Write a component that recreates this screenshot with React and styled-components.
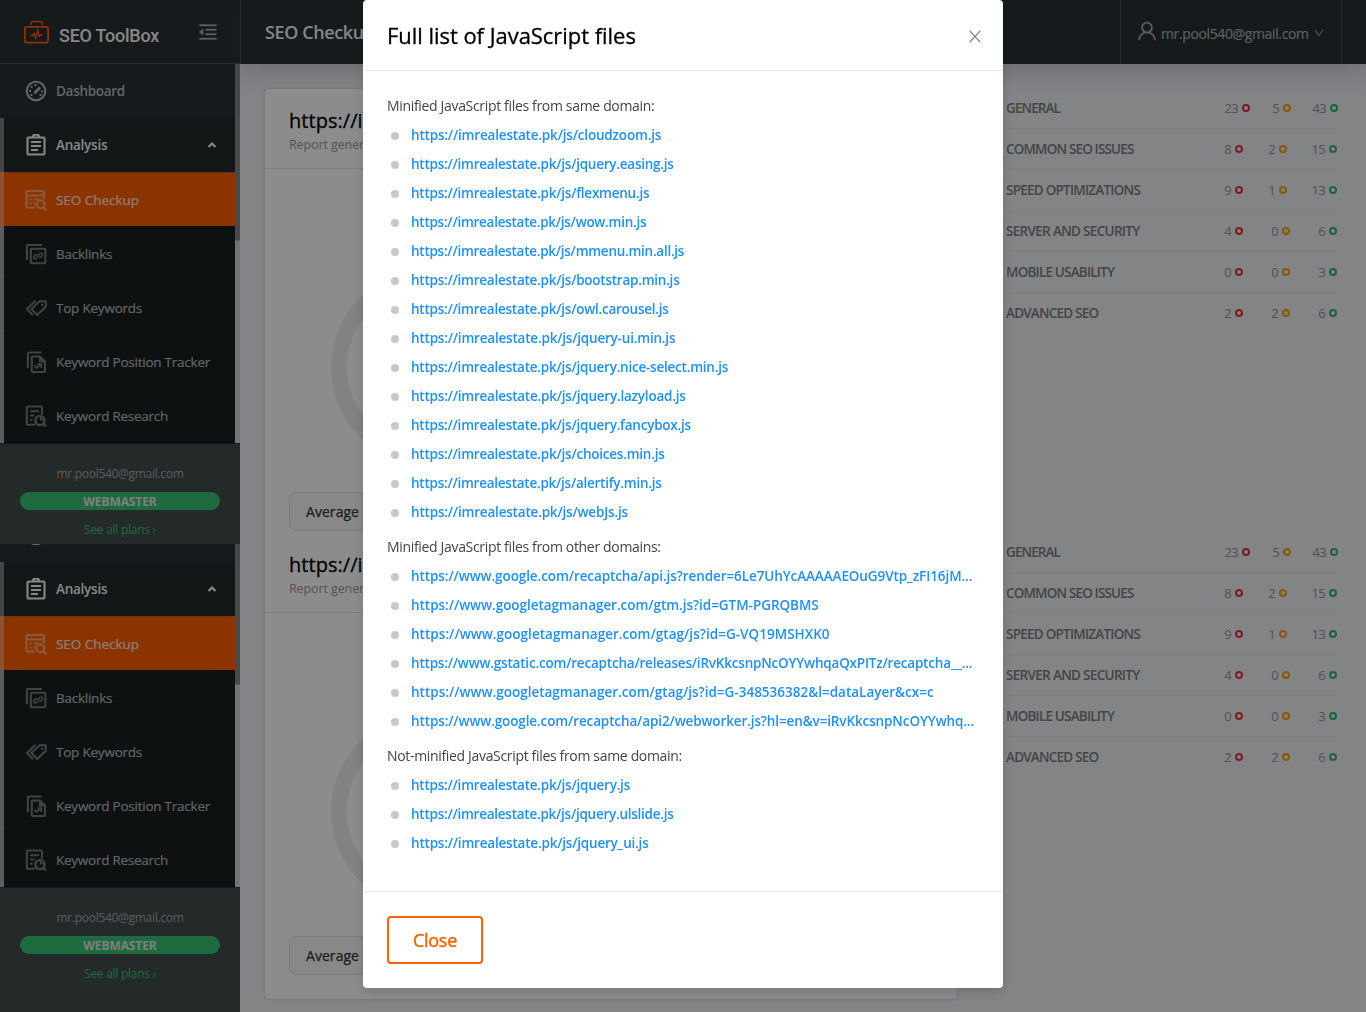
import React from 'react';
import styled, { createGlobalStyle, css } from 'styled-components';
import { AiOutlineMenuFold, AiOutlineUser, AiOutlineDown } from 'react-icons/ai';

const GlobalStyle = createGlobalStyle`
  *, *::before, *::after { box-sizing: border-box; }
  html, body { margin: 0; height: 1012px; overflow: hidden; }
  body {
    font-family: 'Open Sans', 'Noto Sans', sans-serif;
    font-size: 14px;
    color: #434b4c;
    background: #eff0f4;
  }
  ul { list-style: none; margin: 0; padding: 0; }
`;

const Page = styled.div`
  display: flex;
  width: 1366px;
  height: 1012px;
  overflow: hidden;
`;

/* ---------- sidebar ---------- */

const Sidebar = styled.aside`
  display: flex;
  flex-direction: column;
  flex: none;
  width: 240px;
  background: #2a3133;
`;

const Brand = styled.div`
  display: flex;
  align-items: center;
  height: 64px;
  flex: none;
  padding: 0 21px 0 24px;
  border-bottom: 1px solid #4b5355;
`;

const BrandName = styled.div`
  flex: 1;
  margin: 7px 0 0 10px;
  font-family: Roboto, sans-serif;
  font-size: 18px;
  font-weight: 500;
  letter-spacing: -0.25px;
  color: #fff;
  opacity: 0.95;
`;

const FoldIcon = styled(AiOutlineMenuFold)`
  width: 22px;
  height: 22px;
  margin-top: 1px;
  color: #a5a9aa;
  stroke: currentColor;
  stroke-width: 18px;
`;

const MenuWindow = styled.div`
  display: flex;
  flex: none;
  height: ${(p) => p.$height}px;
  overflow: hidden;
  align-items: flex-end;
`;

const MenuList = styled.ul`
  width: 235px;
`;

const Scrollbar = styled.div`
  width: 5px;
  height: 379px;
  background: #d4d4d4;
`;

const Thumb = styled.div`
  height: 177px;
  border-radius: 0 0 3px 3px;
  background: #868686;
`;

const variants = {
  root: css`
    color: #b4b8b9;
    font-weight: 600;
    background: #2a3133;
    border-left-color: #2a3133;
  `,
  open: css`
    color: #f7f7f7;
    font-weight: 600;
    background: #222a2c;
    border-left-color: #7b7f80;
    letter-spacing: -0.25px;
  `,
  active: css`
    padding-top: 2px;
    color: #ffe4d4;
    background: #ff6000;
    border-left-color: #ff9556;
    box-shadow: inset 0 1px 0 #d95200;
    -webkit-text-stroke: 0.2px;
  `,
  sub: css`
    padding-top: 2px;
    color: #b4b8b9;
    background: #181f21;
    border-left-color: #a7abac;
    box-shadow: inset 0 -1px 0 #12191b;
    -webkit-text-stroke: 0.2px;
  `,
};

const MenuItem = styled.li`
  display: flex;
  align-items: center;
  height: 54px;
  padding: 0 18px 0 21px;
  border-left: 4px solid;
  font-size: 13.5px;
  letter-spacing: -0.3px;
  font-weight: 500;
  ${(p) => variants[p.$variant]}
  &:last-child { height: 55px; padding-bottom: 1px; }
`;

const Glyph = styled.svg`
  width: 22px;
  height: 22px;
  margin-right: 9px;
  flex: none;
  fill: none;
  stroke: currentColor;
  stroke-width: 2.1;
  opacity: ${(p) => p.$opacity};
`;

const Label = styled.span`
  flex: 1;
  letter-spacing: ${(p) => p.$ls || 'inherit'};
  white-space: nowrap;
`;

const Caret = styled.svg`
  width: 10px;
  height: 8px;
  fill: none;
  stroke: currentColor;
  stroke-width: 2.2;
`;

const Account = styled.div`
  display: flex;
  flex-direction: column;
  flex: none;
  align-items: center;
  height: ${(p) => p.$height}px;
  padding: 20px 20px 0;
  border-top: 1px solid #2a3133;
  background: #434b4c;
  font-size: 12px;
`;

const Email = styled.div`
  height: 20px;
  line-height: 20px;
  letter-spacing: -0.3px;
  color: #a5a9aa;
`;

const Plan = styled.div`
  width: 200px;
  height: 18px;
  margin-top: 8px;
  border-radius: 9px;
  background: #36c374;
  color: #e4e8e4;
  font-weight: 700;
  line-height: 19px;
  letter-spacing: -0.1px;
  text-align: center;
`;

const Plans = styled.div`
  margin-top: 10px;
  line-height: 20px;
  letter-spacing: -0.27px;
  color: #36c374;
`;

/* ---------- main area ---------- */

const Main = styled.div`
  display: flex;
  flex-direction: column;
  flex: 1;
`;

const TopBar = styled.header`
  display: flex;
  flex: none;
  align-items: stretch;
  justify-content: space-between;
  height: 64px;
  padding: 0 24px;
  border-left: 1px solid #4b5355;
  background: #2a3133;
  box-shadow: 0 4px 28px rgba(60, 60, 95, 0.3);
`;

const PageTitle = styled.div`
  align-self: center;
  font-size: 18px;
  font-weight: 600;
  letter-spacing: -0.4px;
  color: #f2f2f2;
`;

const UserMenu = styled.div`
  display: flex;
  align-items: center;
  width: 222px;
  padding: 2px 0 0 14px;
  border: solid #4b5355;
  border-width: 0 1px;
  color: #a5a9aa;
  font-weight: 500;
  letter-spacing: -0.37px;
  -webkit-text-stroke: 0.2px;
  & > svg:first-child { width: 24px; height: 24px; margin: -5px 2px 0 0; }
  & > svg:last-child { width: 12px; height: 12px; margin-left: 4px; }
`;

const Content = styled.div`
  display: flex;
  align-items: flex-start;
  padding: 25px 24px 0 25px;
`;

const Card = styled.section`
  flex: none;
  width: 692px;
  height: 910px;
  border-radius: 4px;
  background: #fff;
  box-shadow: 0 0 3px rgba(70, 80, 100, 0.3);
`;

const Report = styled.article`
  height: 444px;
`;

const ReportHeader = styled.div`
  height: 80px;
  padding: 18px 24px 0;
  border-bottom: 1px solid #e2e2e2;
`;

const Site = styled.div`
  height: 28px;
  line-height: 27px;
  font-size: 20px;
  font-weight: 500;
  letter-spacing: 0.05px;
  color: #000;
  -webkit-text-stroke: 0.3px;
`;

const Generated = styled.div`
  height: 20px;
  line-height: 20px;
  font-size: 12.5px;
  letter-spacing: -0.1px;
  color: #9a9a9a;
`;

const Gauge = styled.div`
  width: 197px;
  height: 197px;
  margin: 100px 0 26px 66px;
  border: 16px solid #ededed;
  border-radius: 50%;
`;

const Average = styled.div`
  width: 300px;
  height: 39px;
  margin-left: 24px;
  padding-left: 16px;
  border: 1px solid #dedede;
  border-radius: 7px;
  background: #f8f8f8;
  color: #333;
  font-weight: 500;
  line-height: 38px;
  letter-spacing: 0.05px;
  -webkit-text-stroke: 0.25px;
`;

const Score = styled.span`
  color: #d69a3c;
`;

const Side = styled.div`
  width: 331px;
  margin-left: 49px;
`;

const Summary = styled.ul`
  height: 444px;
`;

const SummaryRow = styled.li`
  display: flex;
  align-items: center;
  height: 41px;
  padding-bottom: 1px;
  border-bottom: 1px solid ${(p) => (p.$last ? 'transparent' : '#e3e4e8')};
  &:first-child { height: 40px; padding-bottom: 2px; }
`;

const Topic = styled.div`
  flex: 1;
  font-size: 13.5px;
  font-weight: 600;
  letter-spacing: ${(p) => p.$ls}px;
  color: #7d7e80;
  white-space: nowrap;
`;

const Count = styled.div`
  display: flex;
  align-items: center;
  justify-content: flex-end;
  flex: none;
  width: ${(p) => p.$width}px;
  margin-right: ${(p) => p.$shift || 0}px;
  font-size: 13px;
  letter-spacing: -0.7px;
  color: #93949a;
  &::after {
    content: '';
    flex: none;
    width: 8px;
    height: 8px;
    margin: 1px 0 0 4px;
    border: 2px solid ${(p) => p.$color};
    border-radius: 50%;
  }
`;

/* ---------- dialog ---------- */

const Mask = styled.div`
  position: fixed;
  inset: 0;
  display: flex;
  justify-content: center;
  align-items: flex-start;
  background: rgba(0, 0, 0, 0.45);
`;

const Dialog = styled.div`
  width: 640px;
  height: 988px;
  border-radius: 4px;
  background: #fff;
  box-shadow: 0 4px 12px rgba(0, 0, 0, 0.15);
`;

const DialogHeader = styled.div`
  display: flex;
  align-items: center;
  justify-content: space-between;
  height: 71px;
  padding: 0 22px 0 24px;
  border-bottom: 1px solid #e8e8e8;
`;

const DialogTitle = styled.h1`
  margin: 0;
  font-size: 22px;
  font-weight: 500;
  letter-spacing: -0.04px;
  color: #000;
  -webkit-text-stroke: 0.3px;
`;

const CloseIcon = styled.svg`
  width: 12px;
  height: 13px;
  margin-top: 2px;
  fill: none;
  stroke: #8c8c8c;
  stroke-width: 1.3;
`;

const DialogBody = styled.div`
  height: 820px;
  padding: 20px 24px 0;
`;

const Group = styled.section`
  margin-bottom: 6px;
`;

const GroupLabel = styled.div`
  height: 29px;
  line-height: 30px;
  letter-spacing: -0.33px;
  color: #3f4647;
`;

const FileRow = styled.li`
  display: flex;
  align-items: center;
  height: 29px;
  padding: 1px 0 0 4px;
  &::before {
    content: '';
    flex: none;
    width: 8px;
    height: 8px;
    margin: 1px 12px 0 0;
    border-radius: 50%;
    background: #c8c8c8;
  }
`;

const FileLink = styled.a`
  color: #1e90ff;
  font-size: 13.5px;
  font-weight: 600;
  letter-spacing: ${(p) => p.$ls || 0}px;
  white-space: nowrap;
`;

const DialogFooter = styled.div`
  padding: 24px;
  border-top: 1px solid #e8e8e8;
`;

const CloseButton = styled.button`
  width: 96px;
  height: 48px;
  border: 2px solid #ff6000;
  border-radius: 4px;
  background: #fff;
  color: #ff6000;
  font: 500 18px/43px 'Open Sans', 'Noto Sans', sans-serif;
  letter-spacing: -0.3px;
  padding: 0;
  -webkit-text-stroke: 0.4px;
`;

/* ---------- icons ---------- */

const icons = {
  dashboard: (
    <>
      <circle cx="11" cy="11" r="9.3" />
      <path d="M10 12.5 L15 7.5" strokeWidth="2.6" />
      <circle cx="10.3" cy="12.6" r="1.4" fill="currentColor" stroke="none" />
      <path d="M4 11h2M16 11.5h2M10.5 4v2M6 6.2l1.3 1.3M5.5 15h2M14.5 15h2" />
    </>
  ),
  analysis: (
    <>
      <rect x="2.5" y="3.5" width="17" height="17" rx="1" />
      <path d="M8 3.2a3 3 0 0 1 6 0" strokeWidth="2.4" />
      <path d="M6 8h10M6 12h10M6 16h7" strokeWidth="1.8" />
    </>
  ),
  checkup: (
    <>
      <path d="M10 18.5H2.5a1 1 0 0 1-1-1V3a1 1 0 0 1 1-1H18a1 1 0 0 1 1 1v7M2 6.5h17M4.5 10.3h2M8.5 10.3H14M4.5 14.3h2M8.5 14.3h2" />
      <circle cx="15.5" cy="15.2" r="3.9" />
      <path d="M18 18l3.3 3.3" strokeWidth="2.6" />
    </>
  ),
  backlinks: (
    <>
      <path d="M1.9 17V3a1 1 0 0 1 1-1H17" />
      <rect x="5.8" y="5.8" width="14.6" height="14.4" rx="1" />
      <path d="M12.2 14.600l-.800.800a1.600 1.600 0 0 1-2.300-2.300l1-1a1.600 1.600 0 0 1 2.300 0M14 11.400l.800-.800a1.600 1.600 0 0 1 2.300 2.300l-1 1a1.600 1.600 0 0 1-2.300 0M12 14l2.200-2.200" strokeWidth="1.5" />
    </>
  ),
  keywords: (
    <>
      <path d="M14.5 4.2h6.3v5.6L12.3 18 6.3 12z" strokeLinejoin="round" />
      <path d="M10.5 3.7L1.9 12l6 6.3" />
      <circle cx="17.2" cy="7.8" r="1.2" fill="currentColor" stroke="none" />
    </>
  ),
  tracker: (
    <>
      <path d="M2.9 17V3a1.5 1.5 0 0 1 1.5-1.5H16.5" />
      <path d="M6.8 6.5a1 1 0 0 1 1-1H15l5 5v9.500a1 1 0 0 1-1 1H7.800a1 1 0 0 1-1-1z" />
      <path d="M14 5.5v6h6z" fill="currentColor" stroke="none" />
      <path d="M9.500 14.500l2 2.500 4-3.500M12.500 13.200h3.800v3.800" strokeWidth="1.8" />
    </>
  ),
  research: (
    <>
      <path d="M10 19.8H2.8a1 1 0 0 1-1-1V2.500a1 1 0 0 1 1-1H16a1 1 0 0 1 1 1v7M5 6.200h9M5 10.500h4.500M5 14.800h2.500" />
      <circle cx="15" cy="15.5" r="4.6" strokeWidth="2.5" />
      <path d="M18.3 18.8l2.7 2.7" strokeWidth="2.5" />
      <path d="M15 11.5v4h4z" fill="currentColor" stroke="none" />
    </>
  ),
};

const menu = [
  ['dashboard', 'Dashboard', 'root', 1, '-0.3px'],
  ['analysis', 'Analysis', 'open', 1],
  ['checkup', 'SEO Checkup', 'active', 0.5, '-0.03px'],
  ['backlinks', 'Backlinks', 'sub', 0.6, '-0.25px'],
  ['keywords', 'Top Keywords', 'sub', 0.6, '-0.22px'],
  ['tracker', 'Keyword Position Tracker', 'sub', 0.6, '-0.24px'],
  ['research', 'Keyword Research', 'sub', 0.6, '-0.26px'],
];

const summary = [
  ['GENERAL', [23, 5, 43], [25, 41, 47], -0.9, -1],
  ['COMMON SEO ISSUES', [8, 2, 15], [25, 44, 50], -0.84],
  ['SPEED OPTIMIZATIONS', [9, 1, 13], [25, 44, 50], -0.76],
  ['SERVER AND SECURITY', [4, 0, 6], [25, 47, 47], -0.68],
  ['MOBILE USABILITY', [0, 0, 3], [25, 47, 47], -0.8],
  ['ADVANCED SEO', [2, 2, 6], [25, 47, 47], -0.8],
];
const colors = ['#e8303c', '#f2a30c', '#2fb866'];

const own = 'https://imrealestate.pk/js/';
const groups = [
  {
    label: 'Minified JavaScript files from same domain:',
    files: [
      [own + 'cloudzoom.js', -0.18],
      [own + 'jquery.easing.js', -0.24],
      [own + 'flexmenu.js', -0.24],
      [own + 'wow.min.js', -0.26],
      [own + 'mmenu.min.all.js', -0.26],
      [own + 'bootstrap.min.js', -0.24],
      [own + 'owl.carousel.js', -0.24],
      [own + 'jquery-ui.min.js', -0.2],
      [own + 'jquery.nice-select.min.js', -0.23],
      [own + 'jquery.lazyload.js', -0.22],
      [own + 'jquery.fancybox.js', -0.23],
      [own + 'choices.min.js', -0.23],
      [own + 'alertify.min.js', -0.25],
      [own + 'webJs.js', -0.19],
    ],
  },
  {
    label: 'Minified JavaScript files from other domains:',
    files: [
      ['https://www.google.com/recaptcha/api.js?render=6Le7UhYcAAAAAEOuG9Vtp_zFI16jM...', -0.09],
      ['https://www.googletagmanager.com/gtm.js?id=GTM-PGRQBMS', -0.04],
      ['https://www.googletagmanager.com/gtag/js?id=G-VQ19MSHXK0', 0.03],
      ['https://www.gstatic.com/recaptcha/releases/iRvKkcsnpNcOYYwhqaQxPITz/recaptcha__...', -0.2],
      ['https://www.googletagmanager.com/gtag/js?id=G-348536382&l=dataLayer&cx=c'],
      ['https://www.google.com/recaptcha/api2/webworker.js?hl=en&v=iRvKkcsnpNcOYYwhq...', -0.12],
    ],
  },
  {
    label: 'Not-minified JavaScript files from same domain:',
    files: [
      [own + 'jquery.js', -0.23],
      [own + 'jquery.ulslide.js', -0.25],
      [own + 'jquery_ui.js', -0.2],
    ],
  },
];

function Logo() {
  return (
    <svg width="25" height="24" viewBox="0 0 25 24" fill="none" stroke="#ff6000" strokeWidth="1.7">
      <rect x="0.9" y="6.9" width="23.2" height="15.7" rx="2" />
      <path d="M7.2 4.8V3.5a2 2 0 0 1 2-2h7a2 2 0 0 1 2 2v1.3" />
      <path d="M6.5 15.5h2.3l1.4-2 1.5 4.5 2-7.5 1.5 6 1-1.5h2.3" strokeWidth="1.3" />
    </svg>
  );
}

function Menu({ height }) {
  return (
    <MenuWindow $height={height}>
      <MenuList>
        {menu.map(([icon, label, variant, opacity, ls]) => (
          <MenuItem key={icon} $variant={variant}>
            <Glyph viewBox="0 0 22 22" $opacity={opacity}>{icons[icon]}</Glyph>
            <Label $ls={ls}>{label}</Label>
            {variant === 'open' && <Caret viewBox="0 0 10 8"><path d="M1.5 6L5 2.5 8.5 6" /></Caret>}
          </MenuItem>
        ))}
      </MenuList>
      <Scrollbar><Thumb /></Scrollbar>
    </MenuWindow>
  );
}

function AccountPanel({ height }) {
  return (
    <Account $height={height}>
      <Email>mr.pool540@gmail.com</Email>
      <Plan>WEBMASTER</Plan>
      <Plans>See all plans ›</Plans>
    </Account>
  );
}

export default function App() {
  return (
    <>
      <GlobalStyle />
      <Page>
        <Sidebar>
          <Brand>
            <Logo />
            <BrandName>SEO ToolBox</BrandName>
            <FoldIcon />
          </Brand>
          <Menu height={379} />
          <AccountPanel height={101} />
          <Menu height={343} />
          <AccountPanel height={125} />
        </Sidebar>
        <Main>
          <TopBar>
            <PageTitle>SEO Checkup</PageTitle>
            <UserMenu>
              <AiOutlineUser />
              mr.pool540@gmail.com
              <AiOutlineDown />
            </UserMenu>
          </TopBar>
          <Content>
            <Card>
              {[0, 1].map((n) => (
                <Report key={n}>
                  <ReportHeader>
                    <Site>https://imrealestate.pk</Site>
                    <Generated>Report generated</Generated>
                  </ReportHeader>
                  <Gauge />
                  <Average>Average <Score>SEO score</Score></Average>
                </Report>
              ))}
            </Card>
            <Side>
              {[0, 1].map((n) => (
                <Summary key={n}>
                  {summary.map(([topic, counts, widths, ls, shift], row) => (
                    <SummaryRow key={topic} $last={row === summary.length - 1}>
                      <Topic $ls={ls}>{topic}</Topic>
                      {counts.map((count, i) => (
                        <Count key={colors[i]} $color={colors[i]} $width={widths[i]} $shift={i === 2 ? shift : 0}>
                          {count}
                        </Count>
                      ))}
                    </SummaryRow>
                  ))}
                </Summary>
              ))}
            </Side>
          </Content>
        </Main>
      </Page>
      <Mask>
        <Dialog role="dialog">
          <DialogHeader>
            <DialogTitle>Full list of JavaScript files</DialogTitle>
            <CloseIcon viewBox="0 0 12 13"><path d="M0.7 0.7L11.3 12.3M11.3 0.7L0.7 12.3" /></CloseIcon>
          </DialogHeader>
          <DialogBody>
            {groups.map((group) => (
              <Group key={group.label}>
                <GroupLabel>{group.label}</GroupLabel>
                <ul>
                  {group.files.map(([file, ls]) => (
                    <FileRow key={file}><FileLink $ls={ls}>{file}</FileLink></FileRow>
                  ))}
                </ul>
              </Group>
            ))}
          </DialogBody>
          <DialogFooter>
            <CloseButton>Close</CloseButton>
          </DialogFooter>
        </Dialog>
      </Mask>
    </>
  );
}
